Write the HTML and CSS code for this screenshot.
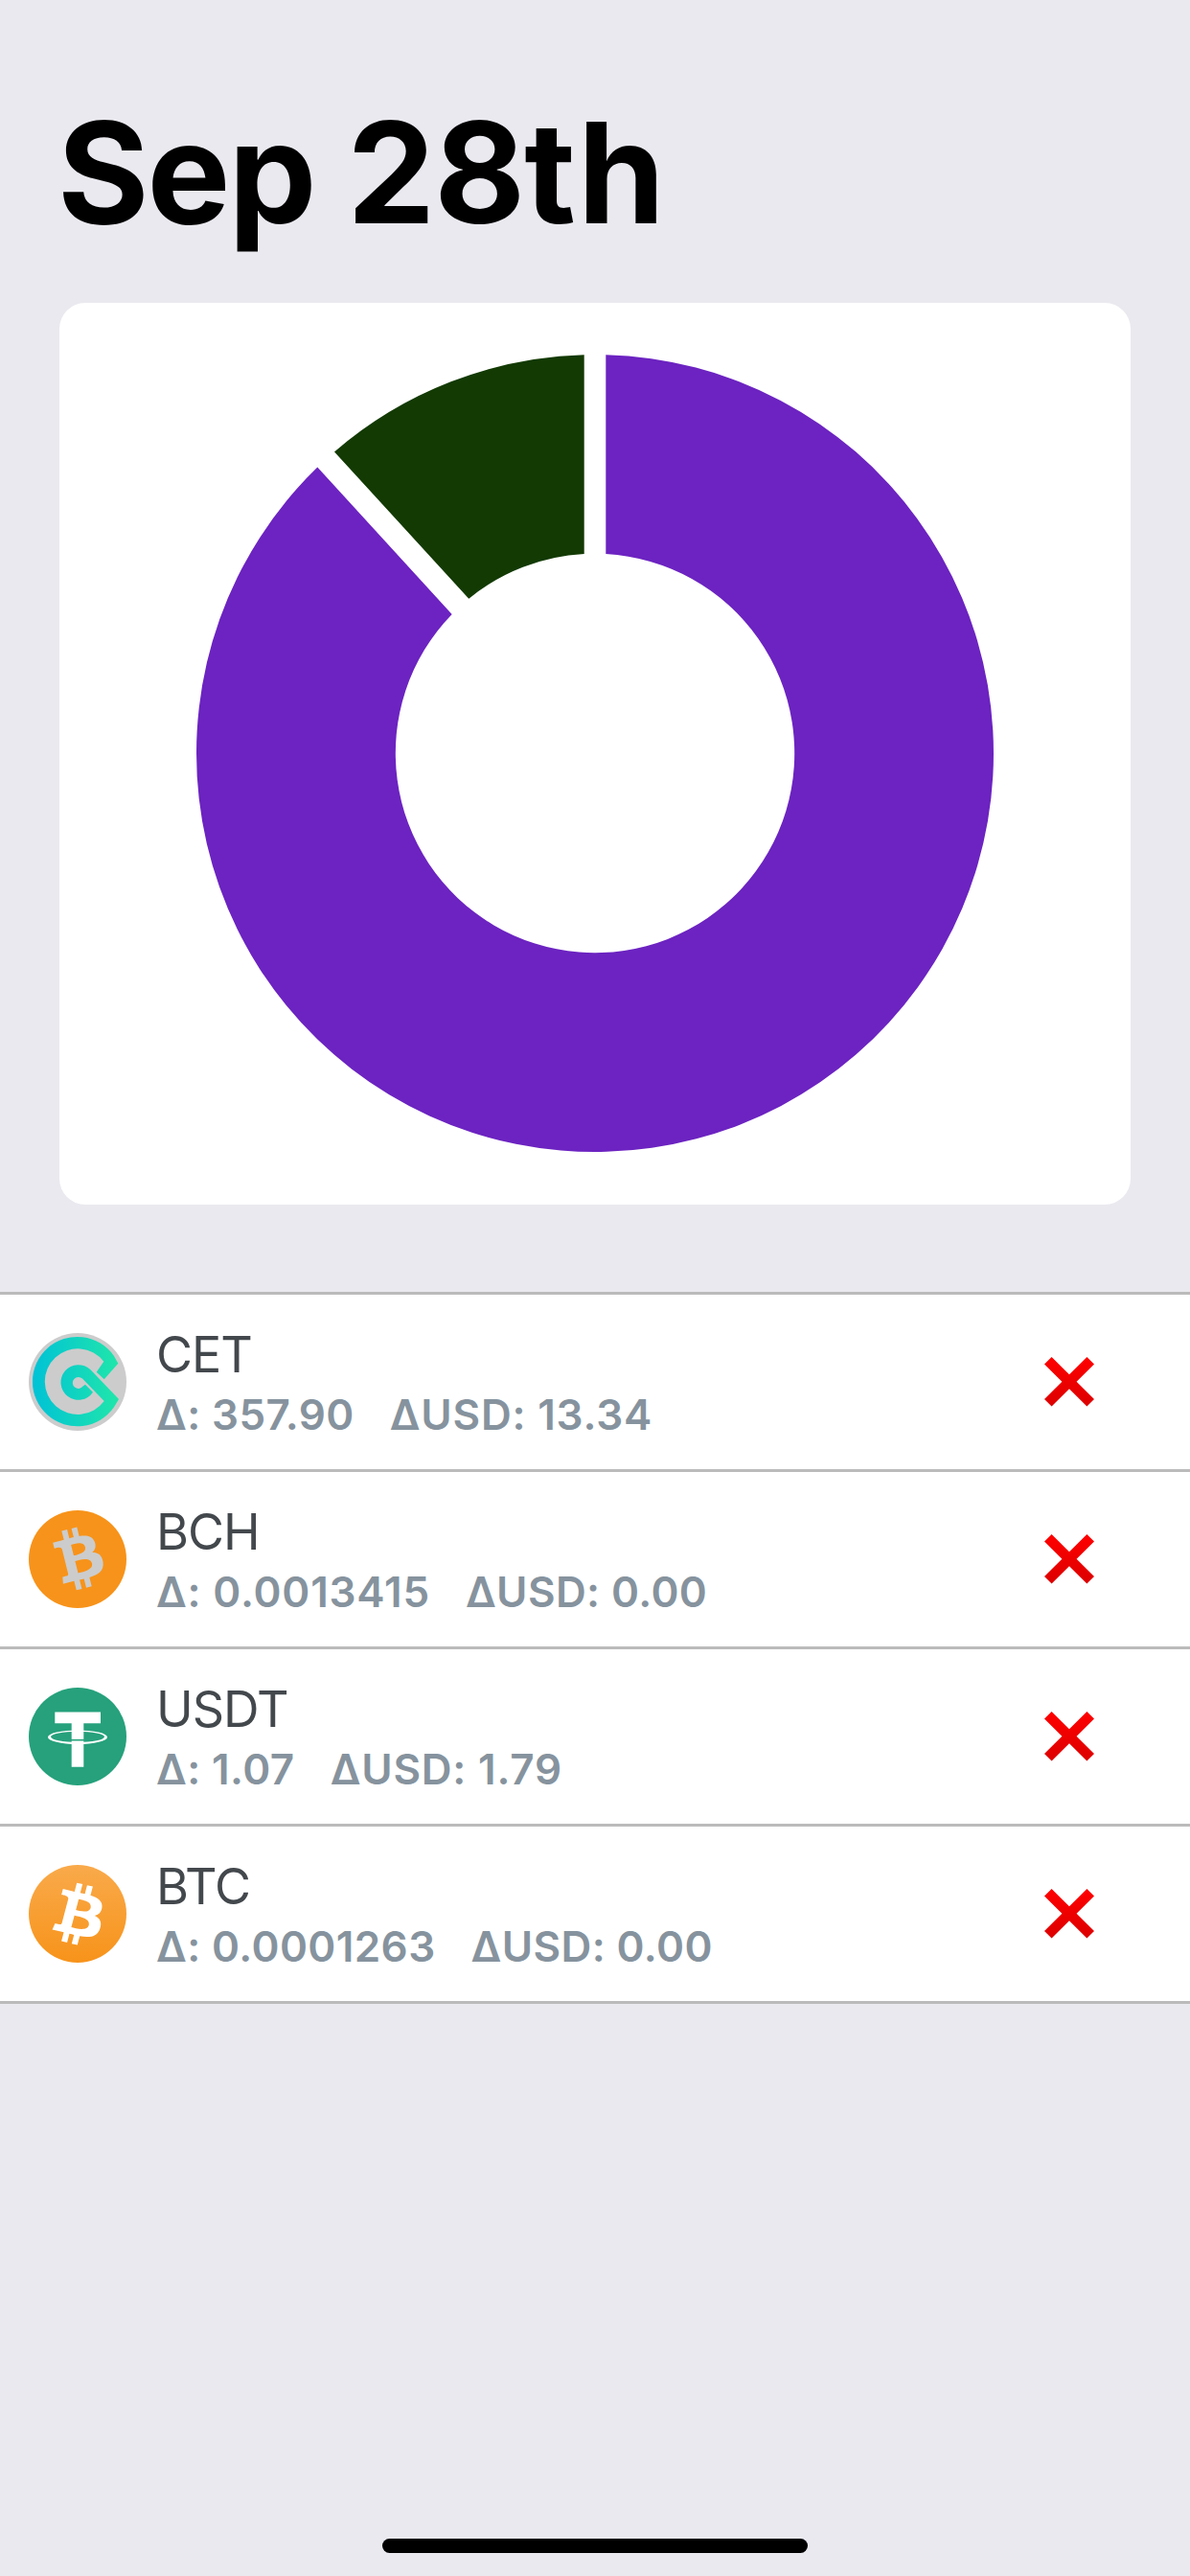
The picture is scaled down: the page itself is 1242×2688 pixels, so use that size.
FILE: index.html
```html
<!DOCTYPE html>
<html lang="en">
<head>
<meta charset="utf-8">
<title>Sep 28th</title>
<link rel="stylesheet" href="styles.css">
</head>
<body>
<svg class="defs" width="0" height="0" aria-hidden="true">
  <defs>
    <linearGradient id="cet" x1="4" y1="0" x2="94" y2="0" gradientUnits="userSpaceOnUse"><stop offset="0" stop-color="#00c2d6"/><stop offset="1" stop-color="#20e6aa"/></linearGradient>
    <linearGradient id="btc" x1="0" y1="0" x2="0" y2="1"><stop offset="0" stop-color="#f9aa4b"/><stop offset="1" stop-color="#f7931a"/></linearGradient>
    <linearGradient id="red" x1="0" y1="0" x2="0" y2="1"><stop offset="0" stop-color="#ff0000"/><stop offset="1" stop-color="#dc0000"/></linearGradient>
    <path id="coin" d="M23.189 14.02c.314-2.096-1.283-3.223-3.465-3.975l.708-2.84-1.728-.43-.69 2.765c-.454-.114-.92-.22-1.385-.326l.695-2.783L15.596 6l-.708 2.839c-.376-.086-.746-.17-1.104-.26l.002-.009-2.384-.595-.46 1.846s1.283.294 1.256.312c.7.175.826.638.805 1.006l-.806 3.235c.048.012.11.03.18.057l-.183-.045-1.13 4.532c-.086.212-.303.531-.793.41.018.025-1.256-.313-1.256-.313l-.858 1.978 2.25.561c.418.105.828.215 1.231.318l-.715 2.872 1.727.43.708-2.84c.472.127.93.245 1.378.357l-.706 2.828 1.728.43.715-2.866c2.948.558 5.164.333 6.097-2.333.752-2.146-.037-3.385-1.588-4.192 1.13-.26 1.98-1.003 2.207-2.538zm-3.95 5.538c-.533 2.147-4.148.986-5.32.695l.95-3.805c1.172.293 4.929.872 4.37 3.11zm.535-5.569c-.487 1.953-3.495.96-4.47.717l.86-3.45c.975.243 4.118.696 3.61 2.733z"/>
    <path id="cross" fill="url(#red)" d="M7.6 0 26 18.3 44.4 0 52 7.4 33.6 25.8 52 44.1 44.4 51.6 26 33.3 7.6 51.6 0 44.1 18.4 25.8 0 7.4Z"/>
  </defs>
</svg>
<main class="screen">
  <h1 class="title"><span class="month">Sep</span> 28<span class="ordinal">th</span></h1>
  <section class="card">
    <svg class="chart" viewBox="-559 -470 1118 940">
      <path fill="#6c23c1" d="M11.3-415.8A416 416 0 1 1-289.7-298.5L-149.3-145.1A208.2 208.2 0 1 0 11.3-207.9Z"/>
      <path fill="#133a03" d="M-11.3-415.8A416 416 0 0 0-272-314.5L-131.7-161.3A208.2 208.2 0 0 1-11.3-207.9Z"/>
    </svg>
  </section>
  <ul class="list">
    <li class="row">
      <svg class="logo" viewBox="0 0 102 102">
        <circle cx="51" cy="51" r="51" fill="#ccc"/>
        <path fill="url(#cet)" d="M93.3 31.7 78.7 48.3 70.7 40.7 78.3 29.7A34.3 34.3 0 1 0 78.7 71L56 47.6A6 6 0 1 0 56.6 55.6L59 53.8 67 61.7A18.3 18.3 0 1 1 64.5 38.3L94 69 89 77.3A46.7 46.7 0 1 1 89 24Z"/>
      </svg>
      <div class="info"><div class="name">CET</div><div class="delta"><span>Δ: 357.90</span><span class="loose">ΔUSD: 13.34</span></div></div>
      <svg class="cross" viewBox="0 0 52 52"><use href="#cross"/></svg>
    </li>
    <li class="row">
      <svg class="logo" viewBox="0 0 102 102">
        <circle cx="51" cy="51" r="51" fill="#f7931a"/>
        <use href="#coin" fill="#ccc" transform="translate(51 50) rotate(-28) scale(3.3) translate(-16 -16)"/>
      </svg>
      <div class="info"><div class="name">BCH</div><div class="delta"><span class="loose">Δ: 0.0013415</span><span>ΔUSD: 0.00</span></div></div>
      <svg class="cross" viewBox="0 0 52 52"><use href="#cross"/></svg>
    </li>
    <li class="row">
      <svg class="logo" viewBox="0 0 102 102">
        <circle cx="51" cy="51" r="51" fill="#26a17b"/>
        <path fill="#fff" d="M27.3 25.6H75V37.3H57.3V82.7H44.7V37.3H27.3Z"/>
        <path fill="#26a17b" d="M44 53.9h14v1.6H44z"/>
        <path fill="#fff" fill-rule="evenodd" d="M20 51.7a31 7.3 0 0 1 62 0a31 7.3 0 0 1-62 0ZM23 51.3a28 5.5 0 0 0 56 0a28 5.5 0 0 0-56 0Z"/>
      </svg>
      <div class="info"><div class="name">USDT</div><div class="delta"><span>Δ: 1.07</span><span class="loose">ΔUSD: 1.79</span></div></div>
      <svg class="cross" viewBox="0 0 52 52"><use href="#cross"/></svg>
    </li>
    <li class="row">
      <svg class="logo" viewBox="0 0 102 102">
        <circle cx="51" cy="51" r="51" fill="url(#btc)"/>
        <use href="#coin" fill="#fff" transform="translate(-3.6 -.8) scale(3.45 3.25)"/>
      </svg>
      <div class="info"><div class="name">BTC</div><div class="delta"><span>Δ: 0.0001263</span><span>ΔUSD: 0.00</span></div></div>
      <svg class="cross" viewBox="0 0 52 52"><use href="#cross"/></svg>
    </li>
  </ul>
  <div class="home-bar"></div>
</main>
</body>
</html>
```

FILE: styles.css
```css
* { box-sizing: border-box; }

body {
  margin: 0;
  background: #e9e9ef;
  font-family: Inter, "Liberation Sans", sans-serif;
}

.defs { position: absolute; }

.screen {
  display: flex;
  flex-direction: column;
  width: 1242px;
  height: 2688px;
  padding: 90px 0 24px;
}

.title {
  margin: 0 60px;
  height: 226px;
  font-size: 146px;
  font-weight: 700;
  line-height: 180px;
  letter-spacing: -1px;
  white-space: nowrap;
  color: #000;
}

.month { letter-spacing: -2px; }

.ordinal { letter-spacing: 2px; }

.card {
  height: 941px;
  margin: 0 62px;
  background: #fff;
  border-radius: 27px;
}

.chart {
  display: block;
  width: 1118px;
  height: 940px;
}

.list {
  margin: 91px 0 0;
  padding: 0;
  list-style: none;
  background: #fff;
  border-top: 3px solid #bbb;
}

.row {
  display: flex;
  align-items: center;
  height: 185px;
  padding: 0 100px 0 30px;
  border-bottom: 3px solid #bbb;
}

.logo {
  flex: none;
  width: 102px;
  height: 102px;
}

.info {
  flex: 1;
  margin-left: 31px;
  padding-top: 3px;
}

.name {
  font-size: 52px;
  line-height: 64px;
  letter-spacing: -1px;
  color: #43484d;
}

.delta {
  display: flex;
  gap: 37px;
  font-size: 44px;
  font-weight: 600;
  line-height: 60px;
  letter-spacing: 0.4px;
  color: #86939e;
  white-space: nowrap;
}

.loose { letter-spacing: 0.8px; }

.cross {
  flex: none;
  width: 52px;
  height: 52px;
}

.home-bar {
  width: 444px;
  height: 15px;
  margin: auto auto 0;
  border-radius: 8px;
  background: #000;
}
```
